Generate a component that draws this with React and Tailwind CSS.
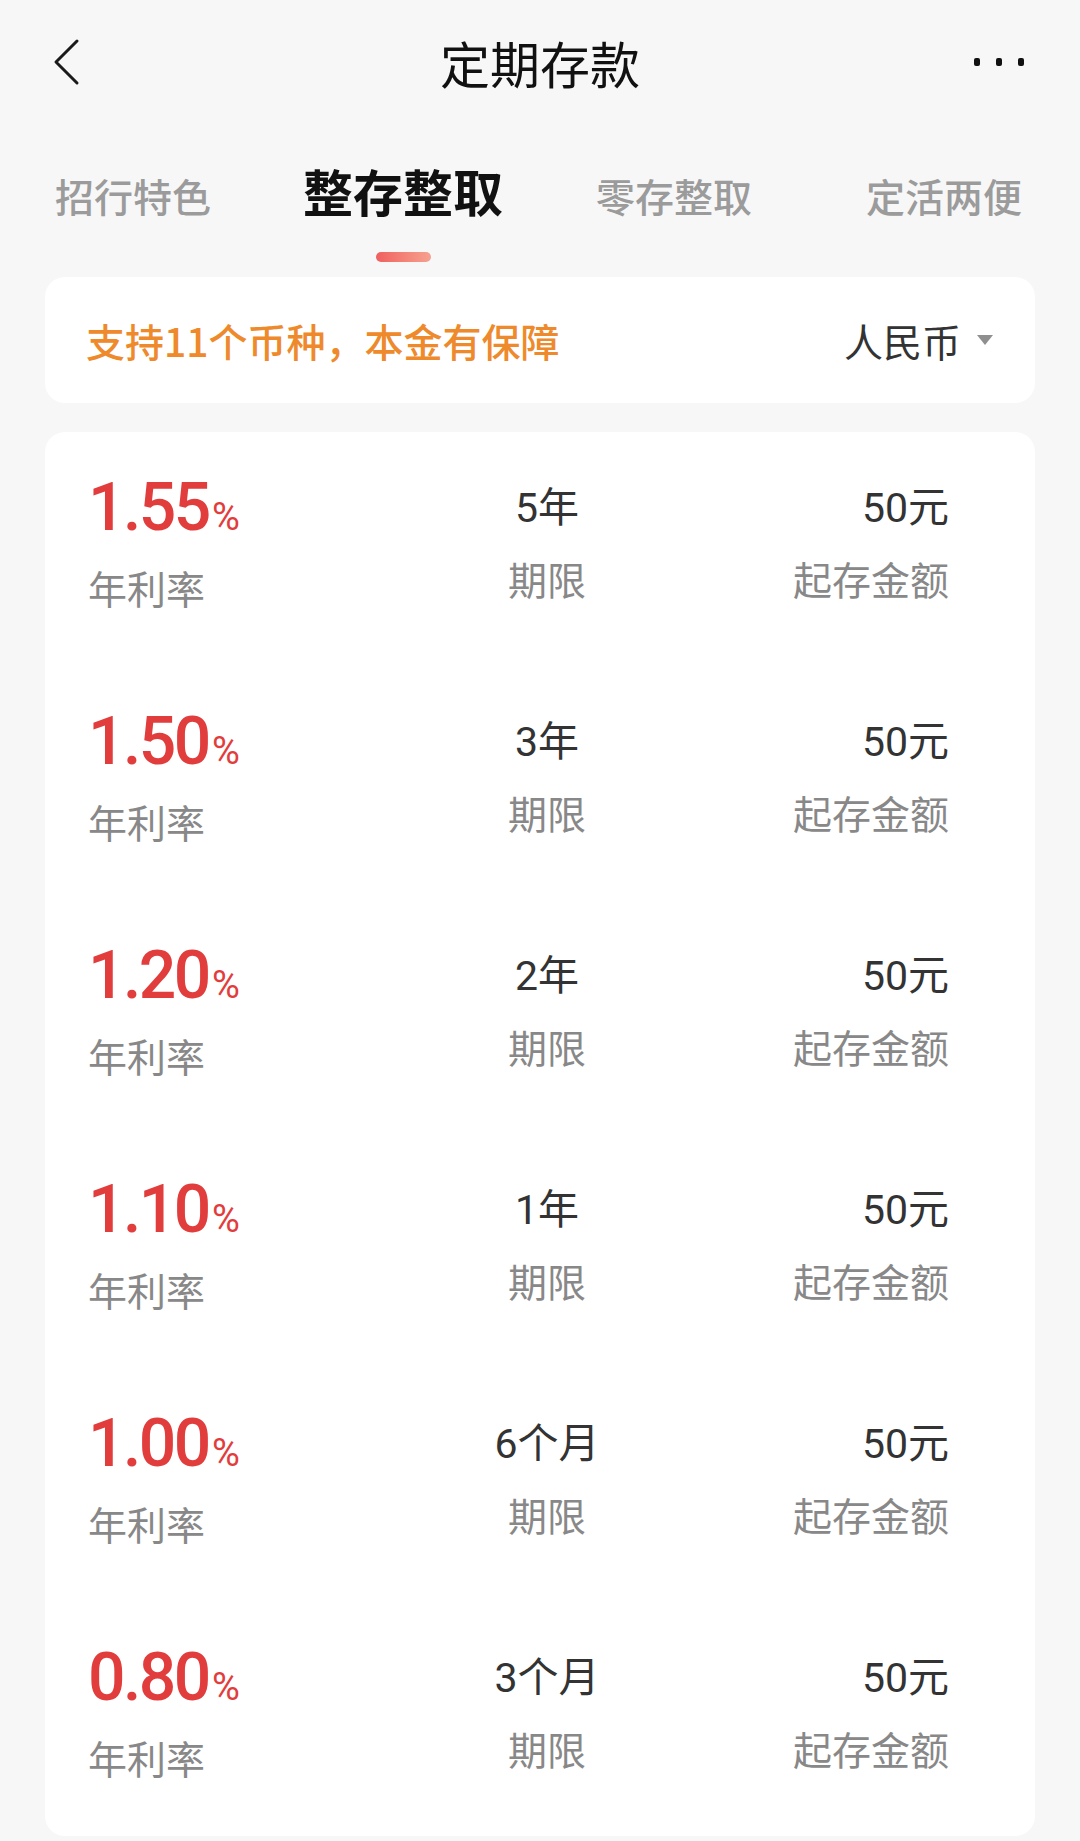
import React from "react";

const rows = [
  { rate: "1.55", term: "5年" },
  { rate: "1.50", term: "3年" },
  { rate: "1.20", term: "2年" },
  { rate: "1.10", term: "1年" },
  { rate: "1.00", term: "6个月" },
  { rate: "0.80", term: "3个月" },
];

function Row({ rate, term }) {
  return (
    <div className="h-[234px] flex pl-[43px]">
      <div className="w-[302px] flex flex-col pt-[41px]">
        <div className="h-[70px] leading-[70px] text-[66px] font-medium text-[#e23d3d] tracking-[-2.5px] font-['Roboto','Noto_Sans_CJK_SC',sans-serif] whitespace-nowrap">
          {rate}
          <span className="text-[38px] leading-none font-normal tracking-normal ml-[3px]">%</span>
        </div>
        <div className="mt-[20px] h-[48px] leading-[48px] text-[39px] text-[#888888]">年利率</div>
      </div>
      <div className="w-[314px] flex flex-col items-center pt-[52px]">
        <div className="h-[48px] leading-[48px] text-[41px] font-normal text-[#333333] font-['Roboto','Noto_Sans_CJK_SC',sans-serif] whitespace-nowrap">
          {term}
        </div>
        <div className="mt-[22px] h-[48px] leading-[48px] text-[39px] text-[#888888]">期限</div>
      </div>
      <div className="w-[245px] flex flex-col items-end pt-[52px]">
        <div className="h-[48px] leading-[48px] text-[41px] font-normal text-[#333333] font-['Roboto','Noto_Sans_CJK_SC',sans-serif] whitespace-nowrap">
          50元
        </div>
        <div className="mt-[22px] h-[48px] leading-[48px] text-[39px] text-[#888888]">起存金额</div>
      </div>
    </div>
  );
}

export default function App() {
  return (
    <div className="w-[1080px] min-h-[1841px] bg-[#f7f7f7] font-['Noto_Sans_CJK_SC',sans-serif] overflow-hidden">
      {/* Header */}
      <div className="h-[124px] grid grid-cols-[1fr_auto_1fr] items-center">
        <div className="flex items-center pl-[50px]">
          <svg width="30" height="50" viewBox="0 0 30 50" fill="none">
            <polyline points="27,4 6,25 27,46" stroke="#1a1a1a" strokeWidth="3" strokeLinecap="round" strokeLinejoin="round" />
          </svg>
        </div>
        <div className="text-[50px] leading-[60px] text-[#111111]">定期存款</div>
        <div className="flex items-center justify-end pr-[56px] gap-[16px]">
          <div className="w-[6px] h-[8px] rounded-[2px] bg-[#111111]" />
          <div className="w-[6px] h-[8px] rounded-[2px] bg-[#111111]" />
          <div className="w-[6px] h-[8px] rounded-[2px] bg-[#111111]" />
        </div>
      </div>

      {/* Tabs */}
      <div className="flex items-baseline pl-[55px] pt-[36px] whitespace-nowrap">
        <div className="text-[39px] leading-[60px] font-medium text-[#9b9b9b]">招行特色</div>
        <div className="ml-[92px] flex flex-col items-center">
          <div className="text-[50px] leading-[60px] font-bold text-[#111111]">整存整取</div>
          <div className="mt-[32px] w-[55px] h-[10px] rounded-full bg-gradient-to-r from-[#ef5f5f] to-[#f5a190]" />
        </div>
        <div className="ml-[93px] text-[39px] leading-[60px] font-medium text-[#9b9b9b]">零存整取</div>
        <div className="ml-[114px] text-[39px] leading-[60px] font-medium text-[#9b9b9b]">定活两便</div>
      </div>

      {/* Currency card */}
      <div className="mt-[15px] mx-[45px] h-[126px] rounded-[20px] bg-white flex items-center justify-between pl-[41px] pr-[42px]">
        <div className="text-[39px] leading-[48px] font-medium text-[#ee8a2c]">支持11个币种，本金有保障</div>
        <div className="flex items-center">
          <div className="text-[39px] leading-[48px] text-[#333333]">人民币</div>
          <svg className="ml-[16px]" width="16" height="10" viewBox="0 0 16 10">
            <polygon points="0,0 16,0 8,10" fill="#8f8f8f" />
          </svg>
        </div>
      </div>

      {/* Rates card */}
      <div className="mt-[29px] mx-[45px] rounded-[20px] bg-white">
        {rows.map((r) => (
          <Row key={r.rate} rate={r.rate} term={r.term} />
        ))}
      </div>
    </div>
  );
}
